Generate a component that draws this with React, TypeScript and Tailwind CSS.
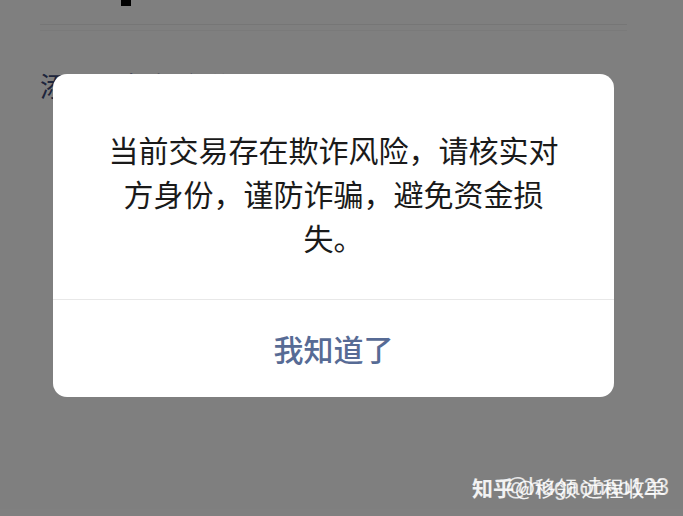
const CJK = { fontFamily: '"Noto Sans CJK SC", "Noto Sans", sans-serif' };

function PageBehind() {
  return (
    <div className="h-full w-full bg-white">
      {/* bottom of the page title, clipped by the top edge */}
      <div className="ml-[121px] h-[6px] w-[10px] bg-black" />
      <div className="ml-10 mr-[56px] mt-[18px] h-px bg-[#ececec]" />
      <div className="ml-10 mr-[56px] mt-[5px] h-px bg-[#f5f5f5]" />
      <p className="ml-10 mt-[38px] text-[27px] leading-[34px] text-[#3c4a78]">
        添加朋友备注说明
      </p>
    </div>
  );
}

function RiskDialog() {
  return (
    <div className="w-[561px] overflow-hidden rounded-[14px] bg-white">
      <div className="px-12 pt-[53px] pb-10 text-center text-[30px] leading-[44px] text-[#1a1a1a]">
        当前交易存在欺诈风险，请核实对方身份，谨防诈骗，避免资金损失。
      </div>
      <div className="h-px bg-[#e8e8e8]" />
      <button className="flex h-[97px] w-full items-center justify-center text-[30px] font-medium text-[#576b95]">
        我知道了
      </button>
    </div>
  );
}

export default function App() {
  return (
    <div className="relative h-[516px] w-full overflow-hidden" style={CJK}>
      <PageBehind />

      {/* dimmed mask */}
      <div className="absolute inset-0 flex items-start bg-black/50 pl-[53px] pt-[74px]">
        <RiskDialog />
      </div>

      {/* watermark, two stamps laid over each other */}
      <div className="absolute left-[472px] top-[472px] text-[21px] leading-[30px] text-white/90">
        <span className="font-bold">知乎</span>
        <span className="ml-[1px]">@移领 远程收单</span>
      </div>
      <div className="absolute left-[505px] top-[472px] text-[23px] leading-[30px] text-white/80" style={{ fontFamily: '"Liberation Sans", sans-serif' }}>
        @hugaohao123
      </div>
    </div>
  );
}
